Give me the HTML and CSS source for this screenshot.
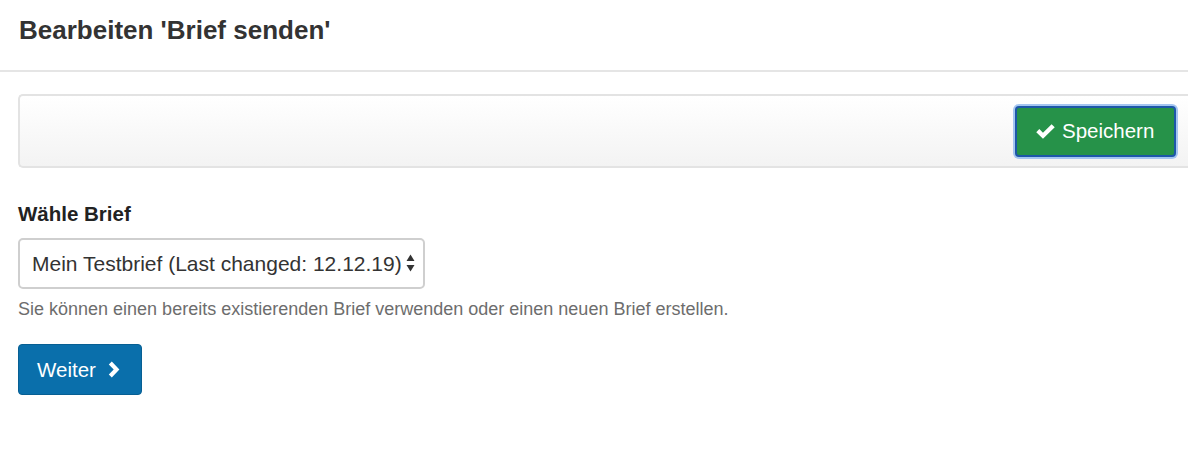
FILE: index.html
```html
<!DOCTYPE html>
<html lang="de">
<head>
<meta charset="utf-8">
<title>Bearbeiten 'Brief senden'</title>
<link rel="stylesheet" href="styles.css">
</head>
<body>
<header class="page-header">
  <h1 class="page-title">Bearbeiten 'Brief senden'</h1>
</header>
<main class="content">
  <div class="toolbar">
    <button class="btn btn-success" type="button">
      <svg class="icon-check" viewBox="0 0 20 16" width="21" height="17" aria-hidden="true"><path d="M1.2 8.6 L4.1 5.7 L7.6 9.2 L15.8 1 L18.8 3.9 L7.6 15 Z" fill="#fff"/></svg>
      <span>Speichern</span>
    </button>
  </div>
  <form class="form">
    <label class="form-label" for="brief">Wähle Brief</label>
    <div class="select-wrap">
      <select id="brief" class="form-select">
        <option>Mein Testbrief (Last changed: 12.12.19)</option>
      </select>
      <svg class="select-arrows" viewBox="0 0 9 20" width="9" height="20" aria-hidden="true"><path d="M4.5 1.5 L8.5 8 L0.5 8 Z M4.5 18.5 L8.5 12 L0.5 12 Z" fill="#333"/></svg>
    </div>
    <p class="help-text">Sie können einen bereits existierenden Brief verwenden oder einen neuen Brief erstellen.</p>
    <button class="btn btn-primary" type="button">
      <span>Weiter</span>
      <svg class="icon-chevron" viewBox="0 0 13 17" width="13" height="17" aria-hidden="true"><path d="M1.8 3.4 L4.8 0.6 L12.4 8.5 L4.8 16.4 L1.8 13.6 L6.7 8.5 Z" fill="#fff"/></svg>
    </button>
  </form>
</main>
</body>
</html>
```
FILE: styles.css
```css
html, body {
  margin: 0;
  padding: 0;
  background: #fff;
}
body {
  font-family: "Liberation Sans", Arial, Helvetica, sans-serif;
  color: #333;
  width: 1188px;
  height: 464px;
  overflow: hidden;
}
.page-header {
  box-sizing: border-box;
  height: 72px;
  border-bottom: 2px solid #e5e5e5;
  padding: 14px 19px 0;
}
.page-title {
  margin: 0;
  font-size: 26px;
  font-weight: bold;
  line-height: 32px;
  color: #333;
}
.content {
  padding: 22px 0 0 18px;
}
.toolbar {
  height: 74px;
  box-sizing: border-box;
  border: 2px solid #e3e3e3;
  border-right: none;
  border-radius: 5px 0 0 5px;
  background: linear-gradient(to bottom, #ffffff 0%, #f3f3f3 100%);
  display: flex;
  justify-content: flex-end;
  align-items: center;
  padding-right: 12px;
}
.btn {
  font-family: "Liberation Sans", Arial, Helvetica, sans-serif;
  font-size: 20.5px;
  color: #fff;
  border-radius: 4px;
  height: 51px;
  box-sizing: border-box;
  display: inline-flex;
  align-items: center;
  cursor: pointer;
}
.btn-success {
  background: #269249;
  border: 2px solid #1d57a8;
  box-shadow: 0 0 0 2px #a4c5f0;
  width: 161px;
  padding: 0 0 0 18px;
  gap: 6px;
}
.icon-check {
  display: block;
}
.form {
  padding-top: 34px;
}
.form-label {
  display: block;
  font-size: 20.5px;
  font-weight: bold;
  line-height: 24px;
  color: #222;
  margin-bottom: 12px;
}
.select-wrap {
  position: relative;
  width: 407px;
}
.form-select {
  -webkit-appearance: none;
  appearance: none;
  width: 407px;
  height: 51px;
  box-sizing: border-box;
  border: 2px solid #cfcfcf;
  border-radius: 5px;
  background: #fff;
  font-family: "Liberation Sans", Arial, Helvetica, sans-serif;
  font-size: 21px;
  color: #333;
  padding: 0 0 0 12px;
  display: block;
}
.select-arrows {
  position: absolute;
  right: 10px;
  top: 15px;
}
.help-text {
  margin: 8px 0 0;
  font-size: 18px;
  line-height: 24px;
  color: #6d6d6d;
}
.btn-primary {
  margin-top: 23px;
  background: #0a6fab;
  border: 1px solid #075f93;
  width: 124px;
  padding: 0 0 0 18px;
  gap: 11px;
}
.icon-chevron {
  display: block;
}
```
